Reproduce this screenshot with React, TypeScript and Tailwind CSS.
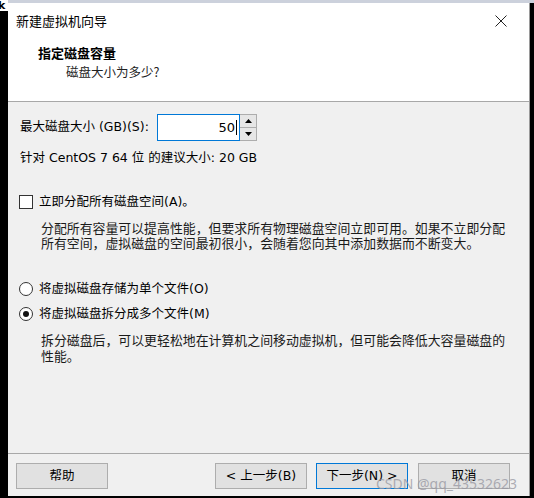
import React from "react";

const cjk = { fontFamily: '"Noto Sans CJK SC", "Noto Sans", sans-serif' };
const mix = { fontFamily: 'Tahoma, "DejaVu Sans", "Noto Sans CJK SC", sans-serif' };

function Btn({ children, primary }: { children: React.ReactNode; primary?: boolean }) {
  return (
    <div
      className={
        "w-[92px] h-[26px] flex items-center justify-center text-[12.5px] text-black bg-[#e1e1e1] border " +
        (primary ? "border-[#0078d7]" : "border-[#adadad]")
      }
      style={mix}
    >
      {children}
    </div>
  );
}

export default function App() {
  return (
    <div className="w-[534px] h-[498px] bg-black flex flex-col overflow-hidden relative">
      <div className="h-[3px] w-full bg-[#ccd1dc] shrink-0" />
      <div className="absolute left-0 top-0 w-[8px] h-[11px] bg-white text-[11px] font-bold leading-[11px] text-black overflow-hidden" style={mix}>
        <span className="ml-[-2px]">k</span>
      </div>
      <div className="flex flex-row flex-1">
        <div className="w-[8px] bg-black shrink-0" />
        <div className="w-[522px] h-[493px] flex flex-col bg-[#f0f0f0] border-r border-[#9a9a9a]">
          {/* header */}
          <div className="h-[98px] bg-white relative shrink-0">
            <div className="absolute left-[8px] top-[9px] text-[13px] leading-[18px] text-black" style={cjk}>
              新建虚拟机向导
            </div>
            <svg className="absolute left-[487px] top-[12px]" width="12" height="12" viewBox="0 0 12 12">
              <path d="M0.5 0.5 L11.5 11.5 M11.5 0.5 L0.5 11.5" stroke="#222" strokeWidth="1" fill="none" />
            </svg>
            <div className="absolute left-[30px] top-[42px] text-[13px] leading-[16px] font-bold text-black" style={cjk}>
              指定磁盘容量
            </div>
            <div className="absolute left-[58px] top-[61px] text-[12.5px] leading-[16px] text-[#222]" style={cjk}>
              磁盘大小为多少?
            </div>
          </div>
          <div className="h-[1px] bg-[#a8a8a8] shrink-0" />
          {/* content */}
          <div className="flex-1 flex flex-col pl-[12px] pt-[12px] text-black" style={mix}>
            <div className="flex flex-row items-center h-[27px]">
              <span className="text-[12.5px] w-[137px]">最大磁盘大小 (GB)(S):</span>
              <div className="w-[83px] h-[27px] bg-white border border-[#0078d7] flex items-center justify-end pr-[2px] text-[13px]">
                50<span className="inline-block w-[1px] h-[15px] bg-black ml-[1px]" />
              </div>
              <div className="w-[17px] h-[27px] flex flex-col bg-white border border-[#adadad] border-l-0">
                <div className="flex-1 flex items-center justify-center bg-[#e6e6e6] border-b border-[#adadad]">
                  <svg width="7" height="4" viewBox="0 0 7 4"><path d="M3.5 0 L7 4 L0 4 Z" fill="#000" /></svg>
                </div>
                <div className="flex-1 flex items-center justify-center bg-[#e6e6e6]">
                  <svg width="7" height="4" viewBox="0 0 7 4"><path d="M0 0 L7 0 L3.5 4 Z" fill="#000" /></svg>
                </div>
              </div>
            </div>
            <div className="mt-[9px] text-[12.5px] leading-[16px]">针对 CentOS 7 64 位 的建议大小: 20 GB</div>

            <div className="mt-[28px] flex flex-row items-center h-[16px]">
              <div className="w-[14px] h-[14px] bg-white border border-[#333] ml-[-1px]" />
              <span className="ml-[6px] text-[12.5px]">立即分配所有磁盘空间(A)。</span>
            </div>
            <div className="mt-[10px] ml-[21px] text-[12.9px] text-[#1a1a1a]" style={cjk}>
              <div className="h-[15px] leading-[15px]">分配所有容量可以提高性能，但要求所有物理磁盘空间立即可用。如果不立即分配</div>
              <div className="h-[15px] leading-[15px]">所有空间，虚拟磁盘的空间最初很小，会随着您向其中添加数据而不断变大。</div>
            </div>

            <div className="mt-[31px] flex flex-row items-center h-[16px]">
              <div className="w-[14px] h-[14px] rounded-full bg-white border border-[#333] ml-[-1px]" />
              <span className="ml-[6px] text-[12.5px]">将虚拟磁盘存储为单个文件(O)</span>
            </div>
            <div className="mt-[9px] flex flex-row items-center h-[16px]">
              <div className="w-[14px] h-[14px] rounded-full bg-white border border-[#333] ml-[-1px] flex items-center justify-center">
                <div className="w-[6px] h-[6px] rounded-full bg-[#111]" />
              </div>
              <span className="ml-[6px] text-[12.5px]">将虚拟磁盘拆分成多个文件(M)</span>
            </div>
            <div className="mt-[10px] ml-[21px] text-[12.9px] text-[#1a1a1a]" style={cjk}>
              <div className="h-[16px] leading-[16px]">拆分磁盘后，可以更轻松地在计算机之间移动虚拟机，但可能会降低大容量磁盘的</div>
              <div className="h-[16px] leading-[16px]">性能。</div>
            </div>
          </div>
          <div className="h-[1px] bg-[#a8a8a8] shrink-0" />
          <div className="h-[42px] shrink-0 flex flex-row items-start pt-[9px] pl-[8px]">
            <Btn>帮助</Btn>
            <div className="ml-[107px]"><Btn>&lt; 上一步(B)</Btn></div>
            <div className="ml-[9px]"><Btn primary>下一步(N) &gt;</Btn></div>
            <div className="ml-[10px]"><Btn>取消</Btn></div>
          </div>
        </div>
        <div className="flex-1 bg-black" />
      </div>
      <div className="absolute left-[376px] top-[475px] text-[14px] leading-[17px] text-[rgba(150,150,160,0.75)] whitespace-nowrap" style={{ fontFamily: '"Noto Sans", sans-serif' }}>
        CSDN @qq_43532623
      </div>
    </div>
  );
}
